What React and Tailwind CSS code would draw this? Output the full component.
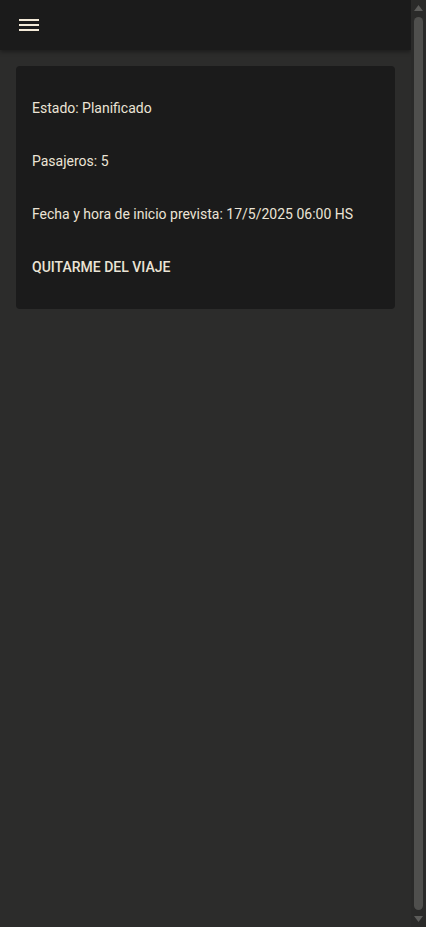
import React from 'react';

function MenuIcon() {
  return (
    <svg width="20" height="12" viewBox="0 0 20 12" className="block">
      <rect x="0" y="0" width="20" height="2" fill="#f3ead8" />
      <rect x="0" y="5" width="20" height="2" fill="#f3ead8" />
      <rect x="0" y="10" width="20" height="2" fill="#f3ead8" />
    </svg>
  );
}

// classic dark scrollbar on the right edge
function Scrollbar() {
  return (
    <aside className="w-[15px] shrink-0 flex flex-col items-center bg-[#2a2a29]">
      <svg width="9" height="6" viewBox="0 0 9 6" className="mt-[5px] block">
        <polygon points="4.5,0 9,6 0,6" fill="#5c5c5a" />
      </svg>
      <div className="mt-[6px] w-[9px] flex-1 rounded-full bg-[#4f4f4d]" />
      <svg width="9" height="6" viewBox="0 0 9 6" className="mt-[6px] mb-[5px] block">
        <polygon points="0,0 9,0 4.5,6" fill="#5c5c5a" />
      </svg>
    </aside>
  );
}

export default function App() {
  return (
    <div
      className="h-[927px] flex overflow-hidden bg-[#2c2c2b]"
      style={{ fontFamily: 'Roboto, "Liberation Sans", sans-serif' }}
    >
      <div className="w-[411px] shrink-0">
        {/* Top bar */}
        <header className="h-[50px] flex items-center pl-[19px] bg-[#1b1b1b] shadow-[0_2px_4px_rgba(0,0,0,0.35)]">
          <button className="p-0">
            <MenuIcon />
          </button>
        </header>

        <main className="p-4">
          <div className="rounded bg-[#1b1b1b] px-4 pt-[32px] pb-[31px] flex flex-col gap-8 text-[14px] leading-[21px] text-[#ebe4d6]">
            <p>Estado: Planificado</p>
            <p>Pasajeros: 5</p>
            <p>Fecha y hora de inicio prevista: 17/5/2025 06:00 HS</p>
            <button className="self-start font-medium uppercase text-[14px] leading-[21px] text-[#ebe4d6]">
              Quitarme del viaje
            </button>
          </div>
        </main>
      </div>
      <Scrollbar />
    </div>
  );
}
